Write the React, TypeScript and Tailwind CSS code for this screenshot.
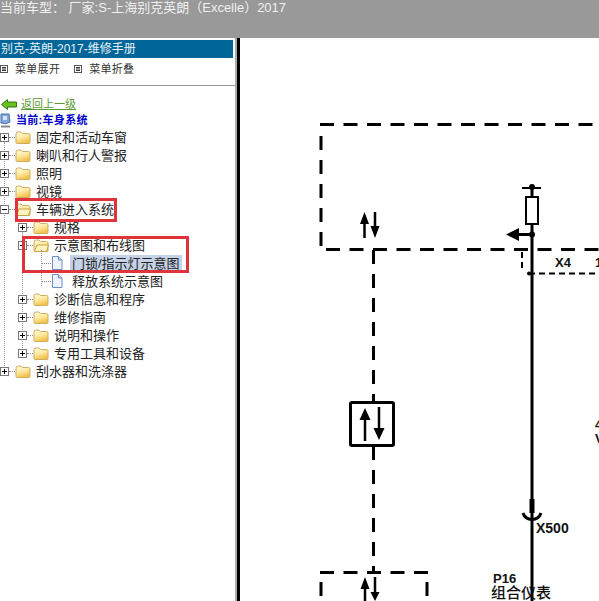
const cjk = { fontFamily: '"Liberation Sans", "Noto Sans CJK SC", sans-serif' };

type Row = { label: string; level: number; kind: 'closed' | 'open' | 'doc'; selected?: boolean };

const rows: Row[] = [
  { label: '固定和活动车窗', level: 0, kind: 'closed' },
  { label: '喇叭和行人警报', level: 0, kind: 'closed' },
  { label: '照明', level: 0, kind: 'closed' },
  { label: '视镜', level: 0, kind: 'closed' },
  { label: '车辆进入系统', level: 0, kind: 'open' },
  { label: '规格', level: 1, kind: 'closed' },
  { label: '示意图和布线图', level: 1, kind: 'open' },
  { label: '门锁/指示灯示意图', level: 2, kind: 'doc', selected: true },
  { label: '释放系统示意图', level: 2, kind: 'doc' },
  { label: '诊断信息和程序', level: 1, kind: 'closed' },
  { label: '维修指南', level: 1, kind: 'closed' },
  { label: '说明和操作', level: 1, kind: 'closed' },
  { label: '专用工具和设备', level: 1, kind: 'closed' },
  { label: '刮水器和洗涤器', level: 0, kind: 'closed' },
];

function PlusBox({ open }: { open: boolean }) {
  return (
    <svg width="9" height="9" viewBox="0 0 9 9" className="relative shrink-0">
      <rect x="0.5" y="0.5" width="8" height="8" fill="#fff" stroke="#777" />
      <path d={open ? 'M2 4.5H7' : 'M2 4.5H7M4.5 2V7'} stroke="#000" />
    </svg>
  );
}

function Folder({ open, id }: { open: boolean; id: string }) {
  return (
    <svg width="16" height="15" viewBox="0 0 16 15" className="shrink-0">
      <defs>
        <linearGradient id={id} x1="0" y1="0" x2="0.4" y2="1">
          <stop offset="0" stopColor="#fffbe0" />
          <stop offset="0.55" stopColor="#fde9a0" />
          <stop offset="1" stopColor="#f2c24c" />
        </linearGradient>
      </defs>
      <path
        d="M1 4 Q1 2 3 2 H6 L7.5 3.5 H13.5 Q15 3.5 15 5 V12.5 Q15 13.5 14 13.5 H2 Q1 13.5 1 12.5 Z"
        fill={`url(#${id})`}
        stroke="#cfae62"
      />
      {open && <path d="M1.5 13 L4 7 H15.5 L13.5 13.5 H2 Z" fill="#fff3c0" stroke="#c9a34a" />}
    </svg>
  );
}

function Doc() {
  return (
    <svg width="12" height="14" viewBox="0 0 12 14" className="shrink-0">
      <path d="M1.5 0.5 H7.5 L11 4 V13.5 H1.5 Z" fill="#eef3fd" stroke="#6f8cc4" />
      <path d="M7.5 0.5 V4 H11" fill="#c9d6f0" stroke="#6f8cc4" />
    </svg>
  );
}

function TreeRow({ row, index }: { row: Row; index: number }) {
  if (row.kind === 'doc') {
    return (
      <div className="flex h-[18px] items-center pl-[41px]">
        <span className="h-0 w-[10px] shrink-0 border-t border-dotted border-[#888]" />
        <Doc />
        <span
          className={
            row.selected
              ? 'ml-[7px] bg-[#c5d3e8] px-[2px] text-[13px] leading-[17px] text-[#222]'
              : 'ml-[9px] text-[13px] leading-[17px] text-[#222]'
          }
        >
          {row.label}
        </span>
      </div>
    );
  }
  return (
    <div className={row.level === 0 ? 'flex h-[18px] items-center pl-0' : 'flex h-[18px] items-center pl-[18px]'}>
      <PlusBox open={row.kind === 'open'} />
      <span className="h-0 w-[6px] shrink-0 border-t border-dotted border-[#888]" />
      <Folder open={row.kind === 'open'} id={`folder-${index}`} />
      <span className="ml-[5px] text-[13px] leading-[17px] text-[#222]">{row.label}</span>
    </div>
  );
}

function MenuIcon() {
  return (
    <svg width="8" height="8" viewBox="0 0 8 8" className="shrink-0">
      <rect x="0.5" y="0.5" width="7" height="7" fill="#fff" stroke="#555" />
      <path d="M2 2.5H6M2 4H6M2 5.5H6" stroke="#333" />
    </svg>
  );
}

function Diagram() {
  return (
    <svg width="359" height="563" viewBox="240 38 359 563" className="block">
      <g fill="none" stroke="#000">
        <path d="M320 124.5 H599" strokeWidth="3" strokeDasharray="14 9.5" />
        <path d="M321 136 V246" strokeWidth="3" strokeDasharray="14 10" />
        <path d="M326 249.5 H599" strokeWidth="3" strokeDasharray="14 9.5" />
        <path d="M373.5 250 V402" strokeWidth="3" strokeDasharray="14 10" />
        <path d="M373.5 446 V572" strokeWidth="3" strokeDasharray="14 10" />
        <path d="M320 572.5 H428" strokeWidth="3" strokeDasharray="14 9.5" />
        <path d="M321 582 V596 M427 582 V596" strokeWidth="3" />
        <path d="M522 252 V272" strokeWidth="2" strokeDasharray="6 4" />
        <path d="M529 273.5 H599" strokeWidth="2" strokeDasharray="6 4" />
        <path d="M532 187 V601" strokeWidth="3" />
        <path d="M522 188 H541" strokeWidth="2" />
        <rect x="526" y="197" width="12" height="27" fill="#fff" strokeWidth="2" />
        <path d="M518 234.5 H532" strokeWidth="3" />
        <rect x="350.5" y="402.5" width="43" height="43" rx="1.5" strokeWidth="3" />
        <path d="M365 415 V441 M379 407 V433" strokeWidth="2.5" />
        <path d="M364.5 222 V238 M375 212 V228" strokeWidth="2.5" />
        <path d="M365 588 V601 M375 577 V597" strokeWidth="2.5" />
        <path d="M523 513 A9.5 9.5 0 0 0 541 513" strokeWidth="3" />
      </g>
      <g fill="#000" stroke="none">
        <circle cx="532" cy="187" r="3" />
        <circle cx="532" cy="234.5" r="3" />
        <circle cx="529" cy="273.5" r="2" />
        <path d="M506 234.5 L519 228 V241 Z" />
        <rect x="529.5" y="499" width="5" height="14" />
        <path d="M365 408 L359.5 420 H370.5 Z M379 440 L373.5 428 H384.5 Z" />
        <path d="M364.5 212 L360 224 H369 Z M375 238 L370.5 226 H379.5 Z" />
        <path d="M365 577 L360.5 589 H369.5 Z M375 601 L370.5 592 H379.5 Z" />
      </g>
      <g fontFamily="'Liberation Sans', sans-serif" fontWeight="700" fill="#111">
        <text x="555" y="267" fontSize="13">X4</text>
        <text x="595" y="267" fontSize="13">1</text>
        <text x="536" y="533" fontSize="14">X500</text>
        <text x="493" y="583" fontSize="13">P16</text>
        <text x="595" y="429" fontSize="13">4</text>
        <text x="595" y="443" fontSize="13">V</text>
      </g>
      <text x="491" y="598" fontSize="15" fontWeight="500" fill="#111" fontFamily='"Noto Sans CJK SC", sans-serif'>
        组合仪表
      </text>
    </svg>
  );
}

export default function App() {
  return (
    <div className="h-[601px] w-[599px] overflow-hidden bg-white" style={cjk}>
      <div className="h-[38px] overflow-hidden whitespace-nowrap bg-[#999999] text-[13px] leading-[15px] text-[#f0f0f0]">
        当前车型：&nbsp;厂家:S-上海别克英朗（Excelle）2017
      </div>
      <div className="flex h-[563px]">
        <aside className="relative h-full w-[240px] shrink-0 border-r-[3px] border-black">
          <div className="h-full border-r-2 border-[#aaaaaa]">
            <div className="pr-[2px] pt-[2px]">
              <div className="h-[18px] bg-[#006699] pl-[1px] text-[12px] leading-[18px] text-[#e8f2f8]">
                别克-英朗-2017-维修手册
              </div>
            </div>
            <div className="flex h-[28px] items-center gap-[7px] border-b border-[#999] pb-[5px] text-[11px] text-[#333]">
              <span className="flex items-center gap-[7px]">
                <MenuIcon />
                <span className="tracking-[0.3px]">菜单展开</span>
              </span>
              <span className="ml-[7px] flex items-center gap-[7px]">
                <MenuIcon />
                <span className="tracking-[0.3px]">菜单折叠</span>
              </span>
            </div>
            <div className="mt-[10px] flex h-[16px] items-center gap-[4px] pl-[1px]">
              <svg width="16" height="11" viewBox="0 0 16 11" className="shrink-0">
                <path d="M0.5 5.5 L6.5 0.5 V3 H15.5 V8 H6.5 V10.5 Z" fill="#6ac020" stroke="#2f7a10" />
              </svg>
              <span className="text-[11px] leading-none text-[#5a9a30] underline">返回上一级</span>
            </div>
            <div className="flex h-[16px] items-center gap-[4px]">
              <svg width="12" height="15" viewBox="0 0 12 15" className="shrink-0">
                <path d="M1 1 H9 L10 9 Q6 12 1 10 Z" fill="#7fa8e0" stroke="#4a6ea8" />
                <path d="M3 3 H7 V7 H3 Z" fill="#d5e4fa" />
                <path d="M1 13.5 H10" stroke="#888" strokeWidth="2" />
              </svg>
              <span className="text-[11px] font-bold leading-none tracking-[0.3px] text-[#0000cc]">当前:车身系统</span>
            </div>
            <div className="relative">
              <span className="absolute bottom-[14px] left-[4px] top-[14px] border-l border-dotted border-[#999]" />
              <span className="absolute left-[22px] top-[104px] h-[126px] border-l border-dotted border-[#999]" />
              <span className="absolute left-[41px] top-[122px] h-[36px] border-l border-dotted border-[#999]" />
              {rows.map((row, index) => (
                <TreeRow key={row.label} row={row} index={index} />
              ))}
            </div>
          </div>
          <div className="absolute left-[15px] top-[160px] h-[24px] w-[102px] border-[3px] border-[#e0343c]" />
          <div className="absolute left-[22px] top-[198px] h-[37px] w-[167px] border-[3px] border-[#e0343c]" />
        </aside>
        <main className="min-w-0 flex-1 overflow-hidden">
          <Diagram />
        </main>
      </div>
    </div>
  );
}
